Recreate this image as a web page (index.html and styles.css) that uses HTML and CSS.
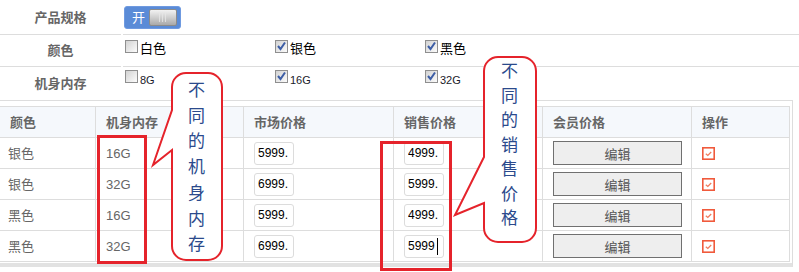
FILE: index.html
```html
<!DOCTYPE html>
<html lang="zh">
<head>
  <meta charset="UTF-8">
  <title>商品规格</title>
  <link rel="stylesheet" href="styles.css">
</head>
<body>

  <!-- 规格选择 -->
  <div class="spec">
    <div class="spec-row row-switch">
      <div class="spec-label">产品规格</div>
      <div class="spec-value">
        <span class="switch"><span class="switch-text">开</span><span class="switch-knob"></span></span>
      </div>
    </div>
    <div class="spec-row row-color">
      <div class="spec-label">颜色</div>
      <div class="spec-value options">
        <label class="opt"><span class="cb"></span><span class="opt-text">白色</span></label>
        <label class="opt"><span class="cb"><svg width="11" height="11" viewBox="0 0 11 11"><polyline points="2,5 4.5,8 9,1.5" fill="none" stroke="#3d5ea6" stroke-width="2"/></svg></span><span class="opt-text">银色</span></label>
        <label class="opt"><span class="cb"><svg width="11" height="11" viewBox="0 0 11 11"><polyline points="2,5 4.5,8 9,1.5" fill="none" stroke="#3d5ea6" stroke-width="2"/></svg></span><span class="opt-text">黑色</span></label>
      </div>
    </div>
    <div class="spec-row row-mem">
      <div class="spec-label">机身内存</div>
      <div class="spec-value options">
        <label class="opt small"><span class="cb"></span><span class="opt-text">8G</span></label>
        <label class="opt small"><span class="cb"><svg width="11" height="11" viewBox="0 0 11 11"><polyline points="2,5 4.5,8 9,1.5" fill="none" stroke="#3d5ea6" stroke-width="2"/></svg></span><span class="opt-text">16G</span></label>
        <label class="opt small"><span class="cb"><svg width="11" height="11" viewBox="0 0 11 11"><polyline points="2,5 4.5,8 9,1.5" fill="none" stroke="#3d5ea6" stroke-width="2"/></svg></span><span class="opt-text">32G</span></label>
      </div>
    </div>
  </div>

  <!-- 规格价格表 -->
  <div class="sku-box">
    <table class="sku">
      <tr>
        <th class="c-color">颜色</th>
        <th class="c-mem">机身内存</th>
        <th class="c-market">市场价格</th>
        <th class="c-sale">销售价格</th>
        <th class="c-member">会员价格</th>
        <th class="c-op">操作</th>
      </tr>
      <tr>
        <td>银色</td>
        <td>16G</td>
        <td><input class="price" type="text" value="5999.00"></td>
        <td><input class="price" type="text" value="4999.00"></td>
        <td><button class="btn-edit">编辑</button></td>
        <td><svg class="op" width="13" height="13" viewBox="0 0 13 13"><rect x="0.8" y="0.8" width="11.4" height="11.4" fill="#fff" stroke="#f05a3c" stroke-width="1.6"/><polyline points="3.8,6.8 5.8,8.4 9.2,5" fill="none" stroke="#f07a5c" stroke-width="1.3"/></svg></td>
      </tr>
      <tr>
        <td>银色</td>
        <td>32G</td>
        <td><input class="price" type="text" value="6999.00"></td>
        <td><input class="price" type="text" value="5999.00"></td>
        <td><button class="btn-edit">编辑</button></td>
        <td><svg class="op" width="13" height="13" viewBox="0 0 13 13"><rect x="0.8" y="0.8" width="11.4" height="11.4" fill="#fff" stroke="#f05a3c" stroke-width="1.6"/><polyline points="3.8,6.8 5.8,8.4 9.2,5" fill="none" stroke="#f07a5c" stroke-width="1.3"/></svg></td>
      </tr>
      <tr>
        <td>黑色</td>
        <td>16G</td>
        <td><input class="price" type="text" value="5999.00"></td>
        <td><input class="price" type="text" value="4999.00"></td>
        <td><button class="btn-edit">编辑</button></td>
        <td><svg class="op" width="13" height="13" viewBox="0 0 13 13"><rect x="0.8" y="0.8" width="11.4" height="11.4" fill="#fff" stroke="#f05a3c" stroke-width="1.6"/><polyline points="3.8,6.8 5.8,8.4 9.2,5" fill="none" stroke="#f07a5c" stroke-width="1.3"/></svg></td>
      </tr>
      <tr>
        <td>黑色</td>
        <td>32G</td>
        <td><input class="price" type="text" value="6999.00"></td>
        <td><span class="caret-wrap"><input class="price" type="text" value="5999"></span></td>
        <td><button class="btn-edit">编辑</button></td>
        <td><svg class="op" width="13" height="13" viewBox="0 0 13 13"><rect x="0.8" y="0.8" width="11.4" height="11.4" fill="#fff" stroke="#f05a3c" stroke-width="1.6"/><polyline points="3.8,6.8 5.8,8.4 9.2,5" fill="none" stroke="#f07a5c" stroke-width="1.3"/></svg></td>
      </tr>
    </table>
  </div>

  <!-- 标注 -->
  <div class="mark mark-mem"></div>
  <div class="mark mark-price"></div>

  <div class="callout callout-mem">
    <svg width="76" height="194" viewBox="0 0 76 194">
      <path d="M36,3 H58 A14,14 0 0 1 72,17 V176 A14,14 0 0 1 58,190 H36 A14,14 0 0 1 22,176 V80 L3,95 L22,40 V17 A14,14 0 0 1 36,3 Z" fill="#fff" stroke="#e5232b" stroke-width="2"/>
    </svg>
    <div class="callout-text">不同的机身内存</div>
  </div>

  <div class="callout callout-price">
    <svg width="90" height="192" viewBox="0 0 90 192">
      <path d="M48,3 H72 A14,14 0 0 1 86,17 V174 A14,14 0 0 1 72,188 H48 A14,14 0 0 1 34,174 V149 L5,161 L34,103 V17 A14,14 0 0 1 48,3 Z" fill="#fff" stroke="#e5232b" stroke-width="2"/>
    </svg>
    <div class="callout-text">不同的销售价格</div>
  </div>

</body>
</html>
```

FILE: styles.css
```css
body {
  margin: 0;
  font-family: "Liberation Sans", "Noto Sans CJK SC", sans-serif;
  font-size: 13px;
  line-height: 15px;
  color: #666;
  background: #fff;
  overflow: hidden;
}

/* 规格选择区 */
.spec-row {
  display: grid;
  grid-template-columns: 121px 1fr;
  column-gap: 2px;
}

.spec-row > div {
  border-bottom: 1px solid #ddd;
}

.row-switch { height: 35px; }
.row-color { height: 32px; }
.row-mem { height: 33px; }

.row-mem > div {
  border-bottom: none;
}

.spec-label {
  display: flex;
  align-items: center;
  justify-content: center;
  font-weight: bold;
  color: #666;
}

.row-switch .spec-value {
  display: flex;
  align-items: center;
  padding-left: 1px;
}

/* 开关 */
.switch {
  display: flex;
  align-items: center;
  box-sizing: border-box;
  width: 57px;
  height: 23px;
  padding: 0 3px 0 7px;
  background: #5a8bd7;
  border: 1px solid #6f9ae0;
  border-radius: 3px;
}

.switch-text {
  color: #fff;
  font-size: 13px;
}

.switch-knob {
  position: relative;
  margin-left: auto;
  box-sizing: border-box;
  width: 28px;
  height: 17px;
  border: 1px solid #8b8b8b;
  border-radius: 2px;
  background: linear-gradient(#f2f2f2, #cfcfcf 50%, #a9a9a9);
}

.switch-knob::after {
  content: "";
  position: absolute;
  left: 9px;
  top: 3px;
  width: 8px;
  height: 9px;
  background: repeating-linear-gradient(to right, #e6e6e6 0, #e6e6e6 1px, transparent 1px, transparent 3px);
  opacity: 0.8;
}

.options {
  display: flex;
  padding: 5px 0 0 2px;
}

.row-mem .options {
  padding-top: 3px;
}

.opt {
  display: flex;
  align-items: flex-start;
  width: 150px;
  color: #000;
}

.cb {
  display: flex;
  align-items: center;
  justify-content: center;
  box-sizing: border-box;
  width: 13px;
  height: 13px;
  margin-right: 2px;
  border: 1px solid #8f8f8f;
  background: linear-gradient(135deg, #d2d2d2, #fcfcfc);
}

.opt-text {
  padding-top: 1px;
}

.opt.small .opt-text {
  font-size: 11px;
  padding-top: 3px;
  color: #1a1a2a;
}

/* 规格价格表 */
.sku-box {
  width: 790px;
  padding: 5px 2px 1px 0;
  border-top: 1px solid #ddd;
  border-right: 1px solid #ddd;
  border-bottom: 4px solid #e2e2e2;
}

.sku {
  width: 790px;
  table-layout: fixed;
  border-collapse: separate;
  border-spacing: 0;
}

.sku th,
.sku td {
  box-sizing: border-box;
  height: 31px;
  padding: 0 10px;
  border-right: 1px solid #ddd;
  border-bottom: 1px solid #ddd;
  text-align: left;
  vertical-align: middle;
  white-space: nowrap;
}

.sku td:first-child {
  padding-left: 8px;
}

.sku th {
  height: 32px;
  border-top: 1px solid #ddd;
  background: #f5f8fc;
  font-weight: bold;
  color: #666;
}

.c-color { width: 96px; }
.c-mem { width: 148px; }
.c-market { width: 150px; }
.c-sale { width: 149px; }
.c-member { width: 149px; }
.c-op { width: 98px; }

.price {
  box-sizing: border-box;
  width: 40px;
  height: 23px;
  padding: 0 5px 0 3px;
  border: 1px solid #dcdcdc;
  border-radius: 3px;
  font-family: "Liberation Sans", sans-serif;
  font-size: 12px;
  color: #000;
  vertical-align: middle;
  outline: none;
}

.caret-wrap {
  position: relative;
  display: inline-block;
  vertical-align: middle;
}

.caret-wrap .price {
  display: block;
}

/* 输入光标 */
.caret-wrap::after {
  content: "";
  position: absolute;
  left: 33px;
  top: 3px;
  width: 1px;
  height: 17px;
  background: #000;
}

.btn-edit {
  box-sizing: border-box;
  width: 129px;
  height: 24px;
  padding: 0;
  border: 1px solid #707070;
  background: #eee;
  font-family: "Noto Sans CJK SC", sans-serif;
  font-size: 13px;
  color: #555;
  vertical-align: middle;
}

.op {
  display: block;
}

/* 红色标注 */
.mark {
  position: absolute;
  box-sizing: border-box;
  border: 3px solid #e5232b;
}

.mark-mem {
  left: 97px;
  top: 135px;
  width: 50px;
  height: 129px;
}

.mark-price {
  left: 380px;
  top: 141px;
  width: 72px;
  height: 130px;
}

.callout {
  position: absolute;
}

.callout svg {
  display: block;
}

.callout-text {
  position: absolute;
  width: 1em;
  font-family: "Noto Sans CJK SC", sans-serif;
  font-size: 17px;
  color: #2b4a8c;
  word-break: break-all;
}

.callout-mem {
  left: 150px;
  top: 70px;
}

.callout-mem .callout-text {
  left: 38px;
  top: 6px;
  line-height: 25.7px;
}

.callout-price {
  left: 450px;
  top: 54px;
}

.callout-price .callout-text {
  left: 51px;
  top: 4px;
  line-height: 24.5px;
}
```
